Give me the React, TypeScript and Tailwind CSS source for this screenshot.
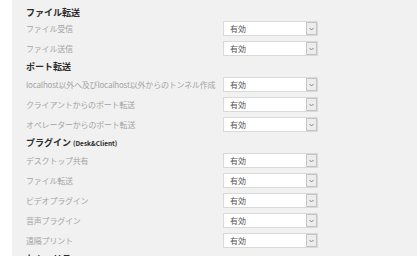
import React from 'react';

type Item =
  | { kind: 'heading'; text: string; sub?: string; first?: boolean }
  | { kind: 'row'; label: string };

const ITEMS: Item[] = [
  { kind: 'row', label: '' },
  { kind: 'heading', text: 'ファイル転送', first: true },
  { kind: 'row', label: 'ファイル受信' },
  { kind: 'row', label: 'ファイル送信' },
  { kind: 'heading', text: 'ポート転送' },
  { kind: 'row', label: 'localhost以外へ及びlocalhost以外からのトンネル作成' },
  { kind: 'row', label: 'クライアントからのポート転送' },
  { kind: 'row', label: 'オペレーターからのポート転送' },
  { kind: 'heading', text: 'プラグイン', sub: '(Desk&Client)' },
  { kind: 'row', label: 'デスクトップ共有' },
  { kind: 'row', label: 'ファイル転送' },
  { kind: 'row', label: 'ビデオプラグイン' },
  { kind: 'row', label: '音声プラグイン' },
  { kind: 'row', label: '遠隔プリント' },
  { kind: 'heading', text: 'セキュリティ' },
];

function Select() {
  return (
    <div className="flex h-[15px] w-[95px] border border-[#d9d9d9] bg-white">
      <div className="flex-1 pl-[6px] text-[8px] leading-[14px] text-[#555]">有効</div>
      <div className="flex w-[11px] items-center justify-center border border-[#c4c4c4] bg-[#ececec]">
        <svg width="5" height="4" viewBox="0 0 5 4">
          <path d="M0.5 1 L2.5 3 L4.5 1" fill="none" stroke="#7a7a7a" strokeWidth="0.9" />
        </svg>
      </div>
    </div>
  );
}

export default function App() {
  return (
    <div
      className="flex h-[256px] w-[417px] overflow-hidden bg-white"
      style={{ fontFamily: '"Noto Sans CJK JP", "Noto Sans", sans-serif' }}
    >
      <div className="w-[12px] shrink-0 bg-white" />
      <div className="flex-1 bg-[#f1f1f1] pl-[14px]">
        <div className="mt-[-15px]">
          {ITEMS.map((it, i) =>
            it.kind === 'heading' ? (
              <div
                key={i}
                className={`h-[16px] whitespace-nowrap text-[9px] font-bold leading-[12px] text-[#2a2a2a] ${it.first ? 'pt-[2px]' : ''}`}
              >
                {it.text}
                {it.sub && <span className="ml-[2px] text-[6.5px]">{it.sub}</span>}
              </div>
            ) : (
              <div key={i} className="flex h-[20px] items-start">
                <div className="w-[197px] shrink-0 whitespace-nowrap text-[8px] leading-[16px] tracking-[-0.2px] text-[#a4a4a4]">
                  {it.label}
                </div>
                <Select />
              </div>
            )
          )}
        </div>
      </div>
    </div>
  );
}
